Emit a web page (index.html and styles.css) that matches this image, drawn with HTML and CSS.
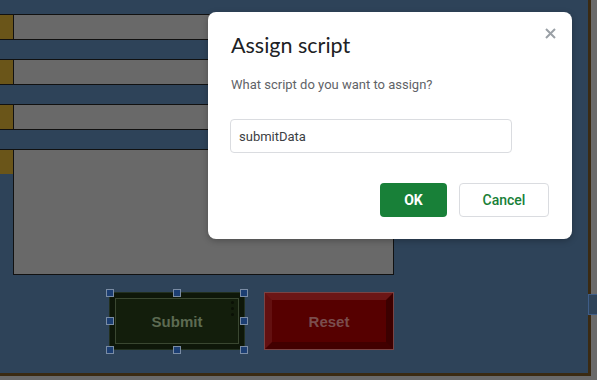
FILE: index.html
```html
<!DOCTYPE html>
<html lang="en">
<head>
    <meta charset="UTF-8">
    <title>Assign script</title>
    <link rel="stylesheet" href="styles.css">
</head>
<body>
    <div class="sheet">
        <!-- form rows drawn on the sheet -->
        <div class="row"><div class="tab"></div><div class="cell"></div></div>
        <div class="row"><div class="tab"></div><div class="cell"></div></div>
        <div class="row"><div class="tab"></div><div class="cell"></div></div>
        <div class="row big"><div class="tab"></div><div class="cell"></div></div>

        <div class="actions">
            <div class="drawing submit">
                <span>Submit</span>
                <div class="kebab"><i></i><i></i><i></i></div>
                <div class="handle h-tl"></div>
                <div class="handle h-tc"></div>
                <div class="handle h-tr"></div>
                <div class="handle h-ml"></div>
                <div class="handle h-mr"></div>
                <div class="handle h-bl"></div>
                <div class="handle h-bc"></div>
                <div class="handle h-br"></div>
            </div>
            <div class="drawing reset"><span>Reset</span></div>
        </div>

        <div class="edge-box"></div>

        <!-- Dialog -->
        <div class="dialog">
            <button class="close" aria-label="Close">
                <svg width="11" height="11" viewBox="0 0 11 11">
                    <path d="M1 1 L10 10 M10 1 L1 10" stroke="#9aa0a6" stroke-width="2" fill="none"/>
                </svg>
            </button>
            <h2>Assign script</h2>
            <p>What script do you want to assign?</p>
            <input type="text" value="submitData">
            <div class="dialog-buttons">
                <button class="ok">OK</button>
                <button class="cancel">Cancel</button>
            </div>
        </div>
    </div>
</body>
</html>
```

FILE: styles.css
```css
body {
    margin: 0;
    background-color: #6a6a6a;
    font-family: Roboto, "Liberation Sans", sans-serif;
}

.sheet {
    position: relative;
    box-sizing: border-box;
    width: 591px;
    height: 376px;
    padding-top: 14px;
    background-color: #2e4359;
    border-right: 3px solid #3a2a12;
    border-bottom: 3px solid #3a2a12;
}

.row {
    display: flex;
    box-sizing: border-box;
    width: 394px;
    height: 26px;
    margin-bottom: 19px;
    border-top: 1px solid #111;
    border-bottom: 1px solid #111;
}

.tab {
    width: 13px;
    background-color: #6a5519;
}

.cell {
    flex: 1;
    background-color: #696969;
    border-left: 1px solid #111;
    border-right: 1px solid #111;
}

.row.big {
    height: 126px;
    margin-bottom: 0;
    border-bottom: none;
}

.row.big .tab {
    align-self: flex-start;
    height: 24px;
}

.row.big .cell {
    border-bottom: 1px solid #111;
}

.actions {
    display: flex;
    gap: 21px;
    margin: 18px 0 0 110px;
}

.drawing {
    position: relative;
    box-sizing: border-box;
    height: 56px;
    display: flex;
    align-items: center;
    justify-content: center;
    font-family: "Liberation Sans", Arial, sans-serif;
    font-size: 15px;
    font-weight: bold;
}

.submit {
    width: 134px;
    background-color: #131e0c;
    border: 5px solid #0e1709;
    box-shadow: inset 0 0 0 1px #3a4731, 0 0 0 1px #223020;
    color: #5d6b52;
}

.reset {
    width: 128px;
    background-color: #560000;
    border-style: solid;
    border-width: 7px;
    border-color: #6c1616 #3c0000 #420000 #631010;
    box-shadow: 0 0 0 1px #7a4444;
    color: #7a4d4d;
}

.kebab {
    position: absolute;
    left: 116px;
    top: 3px;
    display: flex;
    flex-direction: column;
    gap: 3px;
}

.kebab i {
    width: 3px;
    height: 3px;
    border-radius: 50%;
    background-color: #0a1006;
}

.handle {
    position: absolute;
    box-sizing: border-box;
    width: 8px;
    height: 8px;
    background-color: #1c3e72;
    border: 1px solid #7a8ca4;
}

.h-tl { left: -9px; top: -9px; }
.h-tc { left: 58px; top: -9px; }
.h-tr { left: 125px; top: -9px; }
.h-ml { left: -9px; top: 19px; }
.h-mr { left: 125px; top: 19px; }
.h-bl { left: -9px; top: 48px; }
.h-bc { left: 58px; top: 48px; }
.h-br { left: 125px; top: 48px; }

.edge-box {
    position: absolute;
    left: 588px;
    top: 294px;
    width: 12px;
    height: 19px;
    background-color: #2e4359;
    border: 1px solid #3e5d88;
}

.dialog {
    position: absolute;
    left: 208px;
    top: 12px;
    box-sizing: border-box;
    width: 364px;
    height: 227px;
    padding: 19px 23px 22px 23px;
    background-color: #fff;
    border-radius: 8px;
    box-shadow: 0 2px 6px rgba(0, 0, 0, 0.25);
}

.dialog h2 {
    margin: 0;
    font-family: Lato, Roboto, sans-serif;
    font-size: 21.5px;
    font-weight: normal;
    line-height: 28px;
    color: #202124;
}

.dialog p {
    margin: 16px 0 0 0;
    font-size: 13px;
    line-height: 20px;
    color: #5f6368;
}

.dialog input {
    display: block;
    box-sizing: border-box;
    width: 282px;
    height: 34px;
    margin-top: 24px;
    margin-left: -1px;
    padding: 0 8px;
    font-family: Roboto, sans-serif;
    font-size: 13px;
    color: #3c4043;
    border: 1px solid #dadce0;
    border-radius: 4px;
    outline: none;
}

.dialog-buttons {
    display: flex;
    justify-content: flex-end;
    gap: 12px;
    margin-top: 30px;
}

.dialog-buttons button {
    box-sizing: border-box;
    height: 34px;
    font-family: Roboto, sans-serif;
    font-size: 14px;
    border-radius: 4px;
    cursor: pointer;
}

.ok {
    width: 67px;
    background-color: #188038;
    color: #fff;
    font-weight: bold;
    border: none;
}

.cancel {
    width: 90px;
    background-color: #fff;
    color: #188038;
    font-weight: 500;
    border: 1px solid #dadce0;
}

.close {
    position: absolute;
    right: 16px;
    top: 16px;
    width: 11px;
    height: 11px;
    padding: 0;
    border: none;
    background: none;
    display: flex;
}
```
